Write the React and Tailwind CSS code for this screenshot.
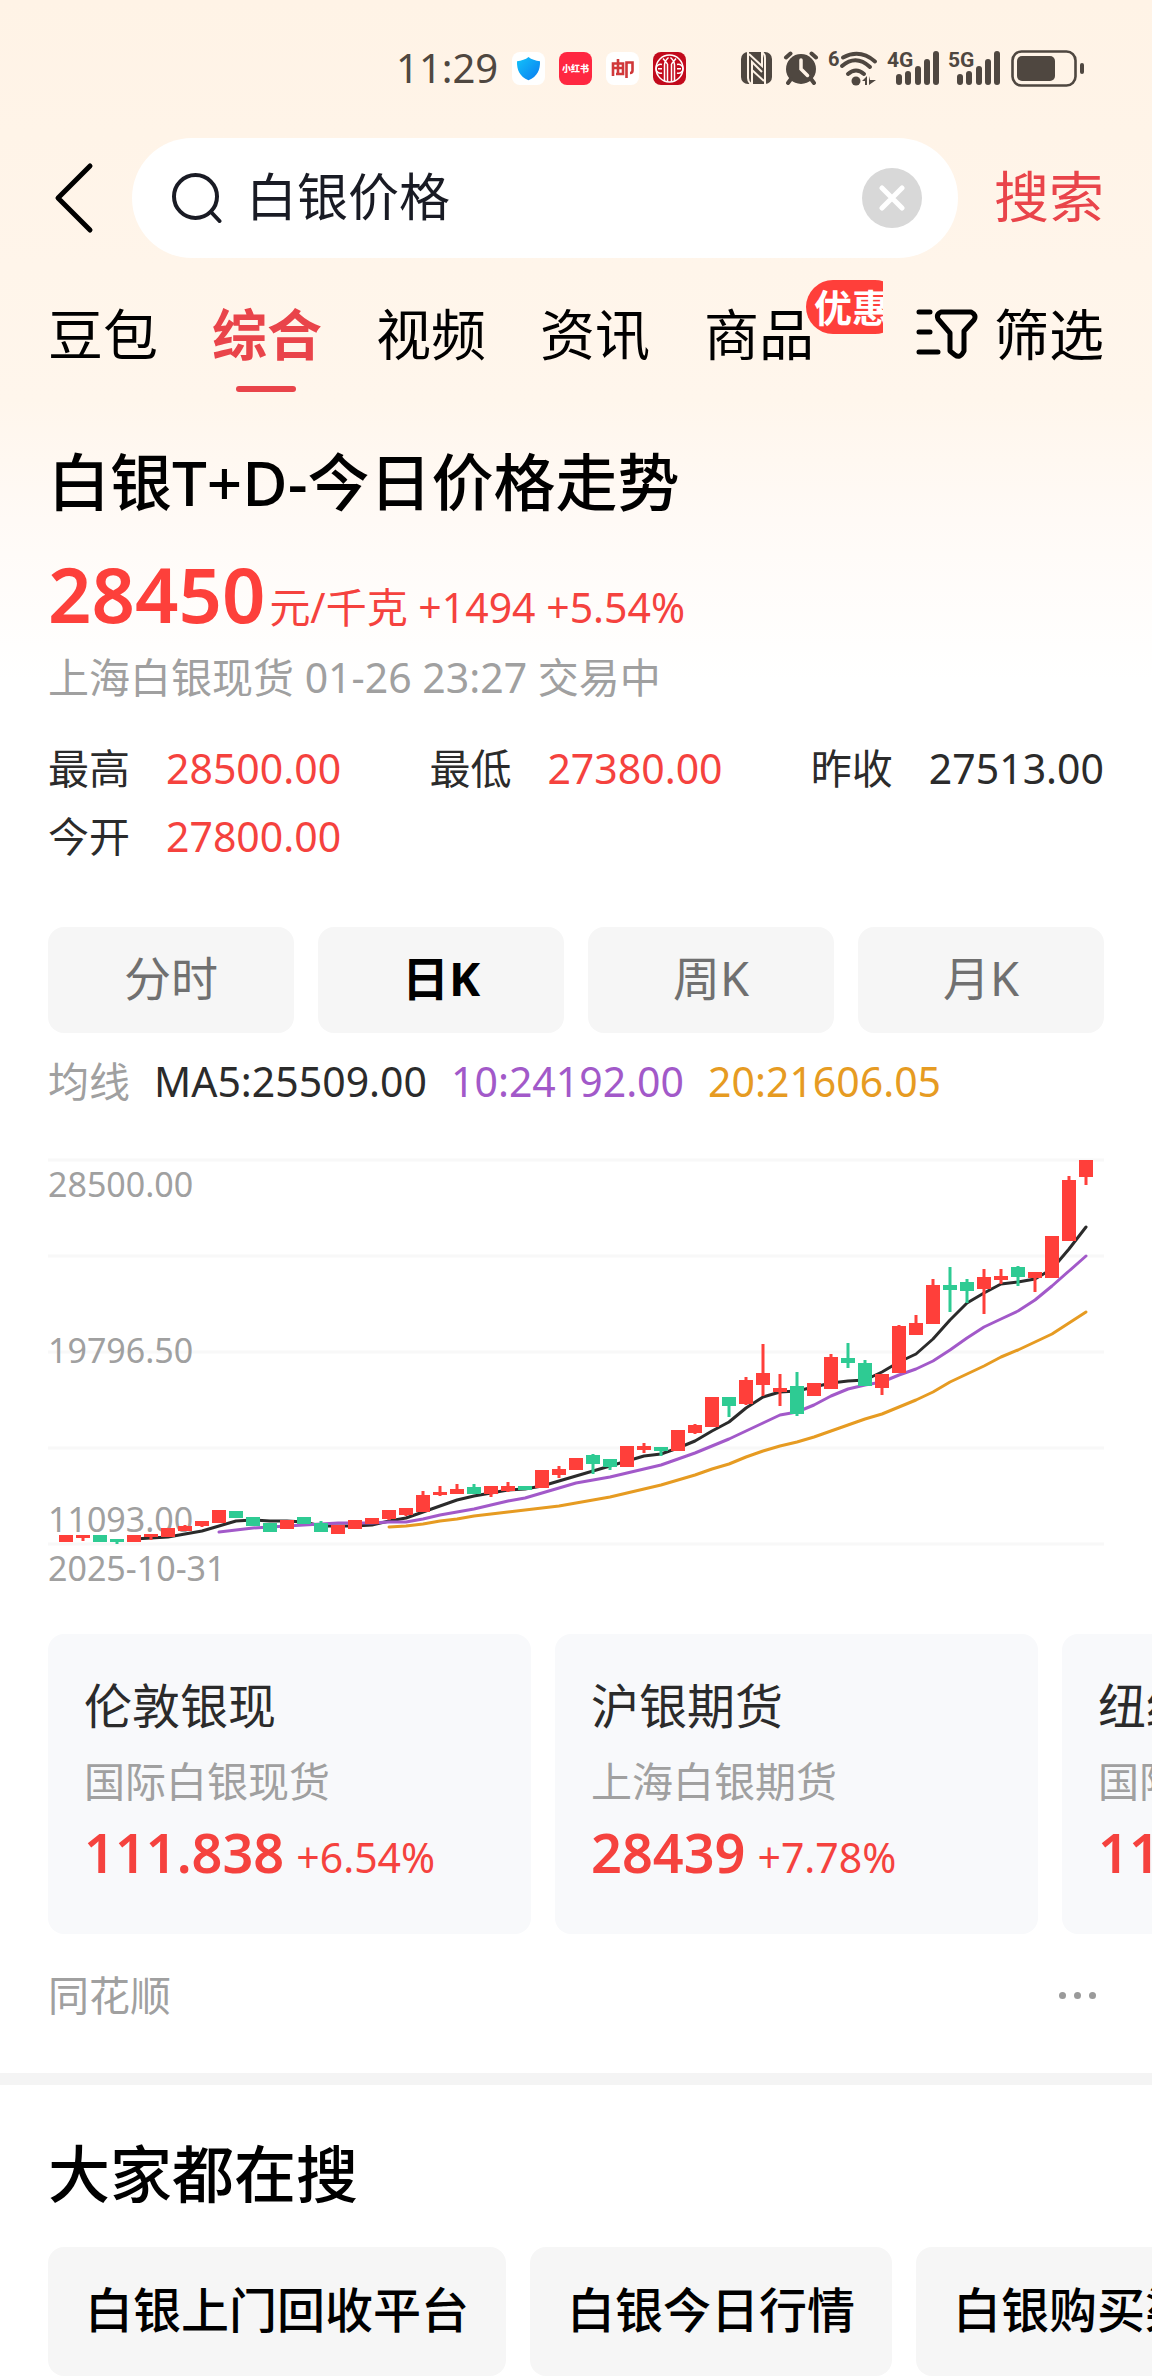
import React, { useState } from 'react';

const APP_FONT = 'font-["Noto_Sans","Noto_Sans_CJK_SC",sans-serif]';

const TABS = ['豆包', '综合', '视频', '资讯', '商品'];

const STATS = [
  { label: '最高', value: '28500.00', up: true },
  { label: '最低', value: '27380.00', up: true },
  { label: '昨收', value: '27513.00', up: false },
  { label: '今开', value: '27800.00', up: true },
];

const PERIODS = ['分时', '日K', '周K', '月K'];

const MARKETS = [
  { name: '伦敦银现', source: '国际白银现货', price: '111.838', change: '+6.54%' },
  { name: '沪银期货', source: '上海白银期货', price: '28439', change: '+7.78%' },
  { name: '纽约银期', source: '国际白银期货', price: '111.780', change: '+6.31%' },
];

const SEARCHES = ['白银上门回收平台', '白银今日行情', '白银购买渠道'];

// [high, bodyTop, bodyBottom, low, rising]
const CANDLES = [
  [375, 375, 382, 382, 1], [375, 375, 378, 381, 1], [375, 375, 382, 382, 0], [379, 379, 382, 384, 0],
  [375, 375, 382, 382, 1], [374, 374, 377, 380, 1], [368, 368, 377, 377, 1], [365, 366, 371, 371, 1],
  [361, 361, 366, 367, 1], [350, 350, 363, 363, 1], [351, 351, 358, 358, 0], [357, 357, 366, 366, 0],
  [363, 363, 372, 372, 0], [360, 360, 369, 369, 1], [357, 357, 364, 364, 0], [361, 363, 372, 372, 0],
  [365, 365, 374, 374, 1], [360, 360, 369, 369, 1], [358, 358, 364, 364, 1], [350, 350, 359, 360, 1],
  [348, 348, 355, 356, 1], [331, 335, 352, 352, 1], [326, 332, 335, 336, 1], [324, 329, 334, 334, 1],
  [324, 327, 334, 334, 0], [326, 326, 334, 337, 1], [322, 326, 331, 332, 1], [326, 326, 330, 330, 0],
  [310, 310, 328, 328, 1], [306, 309, 315, 318, 1], [298, 298, 310, 310, 1], [294, 295, 304, 314, 0],
  [299, 299, 307, 310, 0], [286, 286, 307, 307, 1], [283, 286, 290, 293, 1], [287, 287, 291, 296, 0],
  [270, 270, 291, 291, 1], [264, 265, 273, 274, 1], [237, 237, 267, 267, 1], [237, 237, 246, 257, 0],
  [217, 220, 244, 245, 1], [184, 213, 225, 236, 1], [214, 228, 232, 246, 1], [212, 226, 254, 256, 0],
  [223, 223, 236, 236, 1], [194, 197, 229, 229, 1], [183, 198, 203, 208, 0], [200, 203, 226, 226, 0],
  [214, 214, 228, 235, 1], [165, 166, 213, 213, 1], [155, 163, 175, 175, 1], [119, 125, 164, 164, 1],
  [107, 125, 130, 152, 0], [119, 122, 131, 143, 0], [109, 117, 129, 154, 1], [109, 116, 120, 124, 1],
  [106, 107, 117, 126, 0], [112, 112, 118, 132, 1], [76, 76, 118, 118, 1], [16, 20, 81, 81, 1],
  [0, 0, 17, 25, 1],
];

const AVERAGES = [
  {
    color: '#e69b22',
    start: 19,
    points: [
      367, 366, 364, 361, 359, 356, 354, 352, 350, 348, 346, 343, 340, 337, 333, 329, 325, 320, 315, 309, 304,
      297, 291, 286, 282, 277, 271, 265, 259, 254, 247, 240, 232, 222, 214, 206, 197, 190, 182, 174, 163, 152,
    ],
  },
  {
    color: '#2b2b2b',
    start: 4,
    points: [
      379, 378, 377, 374, 371, 366, 361, 360, 361, 361, 362, 366, 366, 366, 365, 361, 358, 352, 346, 340, 336,
      333, 330, 329, 326, 321, 316, 311, 306, 301, 296, 294, 288, 281, 271, 262, 248, 237, 232, 231, 227, 223,
      221, 220, 212, 202, 194, 179, 160, 143, 133, 124, 122, 119, 109, 89, 67,
    ],
  },
  {
    color: '#a259c9',
    start: 9,
    points: [
      372, 370, 368, 367, 366, 365, 364, 363, 363, 363, 362, 362, 359, 355, 352, 349, 345, 341, 338, 333, 328,
      323, 320, 317, 313, 309, 305, 299, 293, 286, 279, 271, 263, 255, 252, 245, 236, 229, 225, 222, 215, 209,
      201, 190, 178, 167, 159, 151, 140, 126, 111, 96,
    ],
  },
];

const candleX = (i) => 18 + i * 17;

function SignalIcon({ label }) {
  return (
    <svg viewBox="0 0 50 36" className="h-9 w-[50px] overflow-visible" fill="#4f4740" aria-label={`${label} 信号`}>
      <text x="-2" y="17" fontSize="21" fontWeight="700" fontFamily="Roboto, sans-serif">
        {label}
      </text>
      <rect x="7" y="24" width="6" height="11" rx="3" />
      <rect x="16" y="21" width="6" height="14" rx="3" />
      <rect x="26" y="16" width="6" height="19" rx="3" />
      <rect x="35" y="9" width="6" height="26" rx="3" />
      <rect x="44" y="1" width="6" height="34" rx="3" />
    </svg>
  );
}

function StatusBar() {
  return (
    <div className="flex h-10 items-center justify-between pl-[396px] pr-[68px] text-[#4f4740]">
      <div className="flex items-center gap-[14px]">
        <span className="text-[40px] leading-10">11:29</span>
        <svg viewBox="0 0 33 33" className="size-[33px]" aria-hidden="true">
          <defs>
            <linearGradient id="shield" x1="0" y1="0" x2="1" y2="1">
              <stop offset="0" stopColor="#12c4fa" />
              <stop offset="1" stopColor="#0a7bf0" />
            </linearGradient>
          </defs>
          <rect width="33" height="33" rx="8" fill="#fff" />
          <path d="M16.500 5c3 2.500 7 3.700 11.500 4.200.3 8.300-2.500 15.300-11.500 19C7.500 24.500 4.700 17.500 5 9.200 9.500 8.700 13.500 7.500 16.500 5z" fill="url(#shield)" />
        </svg>
        <svg viewBox="0 0 33 33" className="size-[33px]" aria-hidden="true">
          <rect width="33" height="33" rx="8" fill="#ff2741" />
          <text x="16.500" y="20" textAnchor="middle" fontSize="9" fontWeight="900" fill="#fff">小红书</text>
        </svg>
        <svg viewBox="0 0 33 33" className="size-[33px]" aria-hidden="true">
          <rect width="33" height="33" rx="8" fill="#fff" />
          <g fill="none" stroke="#d0383a" strokeWidth="2.600">
            <path d="M7 24V11.500h10v10.500h-7M12 7v15M7.500 16h9M20.500 26V10.500h6v8q0 2.500-2.500 2.500" />
          </g>
        </svg>
        <svg viewBox="0 0 33 33" className="size-[33px]" aria-hidden="true">
          <rect width="33" height="33" rx="8" fill="#c20a1c" />
          <circle cx="16.500" cy="16.500" r="13.500" fill="none" stroke="#fff" strokeWidth="1.500" />
          <g fill="none" stroke="#fff" strokeWidth="1.500">
            <path d="M11.500 29V13q0-4 4-7.500M14.500 29.500V12M18.500 29.500V12M21.500 29V13q0-4-4-7.500M10 6.500 14.500 12M23 6.500 18.500 12" />
            <path d="M9 12.500a4.500 4.500 0 1 0 0 8.500M24 12.500a4.500 4.500 0 1 1 0 8.500M5 16.700h4M24 16.700h4" />
          </g>
        </svg>
      </div>
      <div className="flex items-center gap-[11px]">
        <svg viewBox="0 0 31 32" className="h-8 w-[31px]" aria-hidden="true">
          <rect width="31" height="32" rx="7" fill="#4f4740" />
          <g fill="none" stroke="#fff3e6" strokeWidth="2">
            <path d="M7 0v26q0 4 3 6M24 32V6q0-4-3-6" />
            <path d="M11 32V10l10 10M8 2l13 12V0M11 18l12 11" />
          </g>
        </svg>
        <svg viewBox="0 0 36 34" className="h-[34px] w-9" aria-hidden="true">
          <circle cx="18" cy="18" r="15" fill="#4f4740" />
          <g fill="none" stroke="#4f4740" strokeWidth="4" strokeLinecap="round">
            <path d="M3 6.500 7.500 2.500M33 6.500 28.500 2.500M8 28l-3 4M28 28l3 4" />
          </g>
          <path d="M18 9v9l6.500 6.500" fill="none" stroke="#fff3e6" strokeWidth="3.500" strokeLinecap="round" />
        </svg>
        <svg viewBox="0 0 48 36" className="h-9 w-12 overflow-visible" fill="#4f4740" aria-hidden="true">
          <text x="-2" y="16" fontSize="20" fontWeight="700" fontFamily="Roboto, sans-serif">6</text>
          <g fill="none" stroke="#4f4740" strokeWidth="4" strokeLinecap="round">
            <path d="M13 7.500q17-9 32 4M12 16q14-12 28 1M18 24q8-7 16 0" />
          </g>
          <circle cx="26" cy="31" r="4.500" />
          <path d="M32 31l5-5v9h-2v-4zM39 35v-9l1 4h6z" />
        </svg>
        <SignalIcon label="4G" />
        <SignalIcon label="5G" />
        <svg viewBox="0 0 73 37" className="h-[37px] w-[73px]" aria-hidden="true">
          <rect x="1.500" y="1.500" width="63" height="34" rx="9" fill="none" stroke="#4f4740" strokeWidth="2.600" />
          <rect x="6" y="6" width="38" height="25" rx="5" fill="#4f4740" />
          <rect x="69" y="13" width="4" height="11" rx="2" fill="#4f4740" />
        </svg>
      </div>
    </div>
  );
}

function SearchBar({ query, onChange }) {
  return (
    <form className="mt-[50px] flex items-center pr-12" onSubmit={(e) => e.preventDefault()}>
      <button type="button" aria-label="返回" className="flex w-[132px] shrink-0 pl-[54px]">
        <svg viewBox="0 0 40 72" className="h-[72px] w-10" fill="none" stroke="#000" strokeWidth="5" strokeLinecap="round" strokeLinejoin="round">
          <path d="M36 4 4 36l32 32" />
        </svg>
      </button>
      <div className="flex h-[120px] min-w-0 flex-1 items-center rounded-full bg-white pl-10 pr-9">
        <svg viewBox="0 0 50 50" className="size-[50px] shrink-0" fill="none" stroke="#191b24" strokeWidth="4" strokeLinecap="round" aria-hidden="true">
          <circle cx="23.500" cy="23.500" r="21.500" />
          <path d="M39 39l8.500 9" />
        </svg>
        <input
          aria-label="搜索内容"
          value={query}
          onChange={(e) => onChange(e.target.value)}
          className="ml-6 min-w-0 flex-1 bg-transparent pb-1 text-[51px] leading-[72px] text-[#191b24] outline-none"
        />
        <button type="button" aria-label="清除" onClick={() => onChange('')} className="flex size-[60px] shrink-0 items-center justify-center rounded-full bg-[#d8d8d8]">
          <svg viewBox="0 0 26 26" className="size-[26px]" stroke="#fff" strokeWidth="5" strokeLinecap="round">
            <path d="M3 3l20 20M23 3 3 23" />
          </svg>
        </button>
      </div>
      <button type="submit" className="ml-9 shrink-0 pb-1 text-[55px] leading-[72px] text-[#e9444a]">搜索</button>
    </form>
  );
}

function TabBar({ active, onSelect }) {
  return (
    <div className="mt-[22px] flex h-28 items-center justify-between px-12">
      <nav className="flex h-full w-[835px] gap-[54px] overflow-hidden">
        {TABS.map((tab) => (
          <button
            key={tab}
            type="button"
            onClick={() => onSelect(tab)}
            className={`relative h-full shrink-0 pb-1 text-[55px] leading-[72px] ${tab === active ? 'font-bold text-[#e9444a]' : 'text-black'}`}
          >
            {tab}
            {tab === active && <span className="absolute bottom-0 left-6 h-[6px] w-[60px] rounded-full bg-[#e9444a]" />}
            {tab === '商品' && (
              <span className="absolute left-[102px] top-0 w-24 rounded-full bg-[#ff3f3a] pl-2 text-left text-[38px] font-bold leading-[54px] text-white">
                优惠
              </span>
            )}
          </button>
        ))}
      </nav>
      <button type="button" className="flex shrink-0 items-center gap-4 pb-1 text-[55px] leading-[72px]">
        <svg viewBox="0 0 62 50" className="h-[50px] w-[62px]" fill="none" stroke="#000" strokeWidth="5" strokeLinecap="round" strokeLinejoin="round" aria-hidden="true">
          <path d="M3 3h11M3 23h11M3 43h19" />
          <path d="M25 3h30q6 3 3 8L48 22v20q-4 8-9 4l-5-4V24L22 10q-2-5 3-7z" />
        </svg>
        筛选
      </button>
    </div>
  );
}

function KLineChart() {
  return (
    <svg viewBox="0 -11 1056 399" className="mt-10 block w-full" role="img" aria-label="白银T+D 日K线">
      {[0, 96, 192, 288, 384].map((y) => (
        <path key={y} d={`M0 ${y}H1056`} stroke="#f8f8f8" strokeWidth="3" />
      ))}
      <g fontSize="34" fill="#a0a0a0">
        <text x="0" y="37">28500.00</text>
        <text x="0" y="203">19796.50</text>
        <text x="0" y="372">11093.00</text>
      </g>
      {AVERAGES.map(({ color, start, points }) => (
        <polyline
          key={color}
          points={points.map((y, i) => `${candleX(start + i)},${y}`).join(' ')}
          fill="none"
          stroke={color}
          strokeWidth="3"
          strokeLinejoin="round"
          strokeLinecap="round"
        />
      ))}
      {CANDLES.map(([high, top, bottom, low, rising], i) => (
        <g key={i} fill={rising ? '#ff3f3a' : '#2ecb93'}>
          <rect x={candleX(i) - 1.5} y={high} width="3" height={low - high} />
          <rect x={candleX(i) - 7} y={top} width="14" height={bottom - top} />
        </g>
      ))}
    </svg>
  );
}

function MarketCard({ name, source, price, change }) {
  return (
    <a href="#" className="w-[483px] shrink-0 rounded-2xl bg-[#f8f9fb] px-9 pb-[46px] pt-[42px]">
      <div className="text-[48px] leading-[60px] text-[#2b2b2b]">{name}</div>
      <div className="mt-[17px] text-[41px] leading-[56px] text-[#a0a0a0]">{source}</div>
      <div className="mt-[7px] flex items-baseline gap-3 text-[#f5423e]">
        <span className="text-[54px] font-semibold leading-[72px]">{price}</span>
        <span className="text-[41px] leading-10">{change}</span>
      </div>
    </a>
  );
}

export default function App() {
  const [query, setQuery] = useState('白银价格');
  const [tab, setTab] = useState('综合');
  const [period, setPeriod] = useState('日K');

  return (
    <div className={`w-full overflow-hidden bg-white bg-[linear-gradient(to_bottom,#fff3e6_0px,#fff6ec_400px,#fffaf6_520px,#ffffff_680px)] pt-12 text-black ${APP_FONT}`}>
      <StatusBar />
      <SearchBar query={query} onChange={setQuery} />
      <TabBar active={tab} onSelect={setTab} />

      <section className="px-12">
        <h1 className="mt-[50px] text-[62px] font-medium leading-[80px]">白银T+D-今日价格走势</h1>
        <div className="mt-7 flex items-baseline text-[#f5423e]">
          <strong className="text-[76px] font-semibold leading-[88px] text-[#fd403b]">28450</strong>
          <span className="ml-1 text-[41px] leading-10">元/千克 +1494 +5.54%</span>
        </div>
        <p className="mt-[11px] text-[41px] leading-[56px] text-[#a0a0a0]">上海白银现货 01-26 23:27 交易中</p>

        <dl className="mt-[35px] flex flex-wrap justify-between gap-y-3 text-[41px] leading-[56px] text-[#2b2b2b]">
          {STATS.map((s) => (
            <div key={s.label} className="flex gap-9">
              <dt>{s.label}</dt>
              <dd className={s.up ? 'text-[#f5423e]' : ''}>{s.value}</dd>
            </div>
          ))}
        </dl>

        <div className="mt-[63px] grid grid-cols-4 gap-6">
          {PERIODS.map((p) => (
            <button
              key={p}
              type="button"
              onClick={() => setPeriod(p)}
              className={`h-[106px] rounded-2xl bg-[#f6f6f6] pb-1 text-[47px] leading-[60px] ${p === period ? 'font-bold text-black' : 'text-[#707070]'}`}
            >
              {p}
            </button>
          ))}
        </div>

        <div className="mt-5 flex gap-6 text-[41px] leading-[56px]">
          <span className="text-[#a0a0a0]">均线</span>
          <span className="text-[#2b2b2b]">MA5:25509.00</span>
          <span className="text-[#a259c9]">10:24192.00</span>
          <span className="text-[#e69b22]">20:21606.05</span>
        </div>

        <KLineChart />
        <div className="text-[34px] leading-10 text-[#a0a0a0]">2025-10-31</div>
      </section>

      <div className="mt-[46px] flex gap-6 overflow-hidden pl-12">
        {MARKETS.map((m) => (
          <MarketCard key={m.name} {...m} />
        ))}
      </div>

      <div className="mt-[33px] flex items-center justify-between px-12 text-[41px] leading-[56px] text-[#a0a0a0]">
        <span>同花顺</span>
        <button type="button" aria-label="更多" className="flex gap-2 px-2">
          <span className="size-[7px] rounded-full bg-[#9a9a9a]" />
          <span className="size-[7px] rounded-full bg-[#9a9a9a]" />
          <span className="size-[7px] rounded-full bg-[#9a9a9a]" />
        </button>
      </div>

      <hr className="mt-[50px] h-3 border-0 bg-[#f4f4f4]" />

      <section className="pl-12">
        <h2 className="mt-[49px] text-[62px] font-medium leading-[80px]">大家都在搜</h2>
        <div className="mt-[33px] flex gap-6 overflow-hidden">
          {SEARCHES.map((s) => (
            <a key={s} href="#" className="shrink-0 rounded-2xl bg-[#f6f6f6] px-[37px] pb-1 text-[48px] font-medium leading-[125px]">
              {s}
            </a>
          ))}
        </div>
      </section>
    </div>
  );
}
